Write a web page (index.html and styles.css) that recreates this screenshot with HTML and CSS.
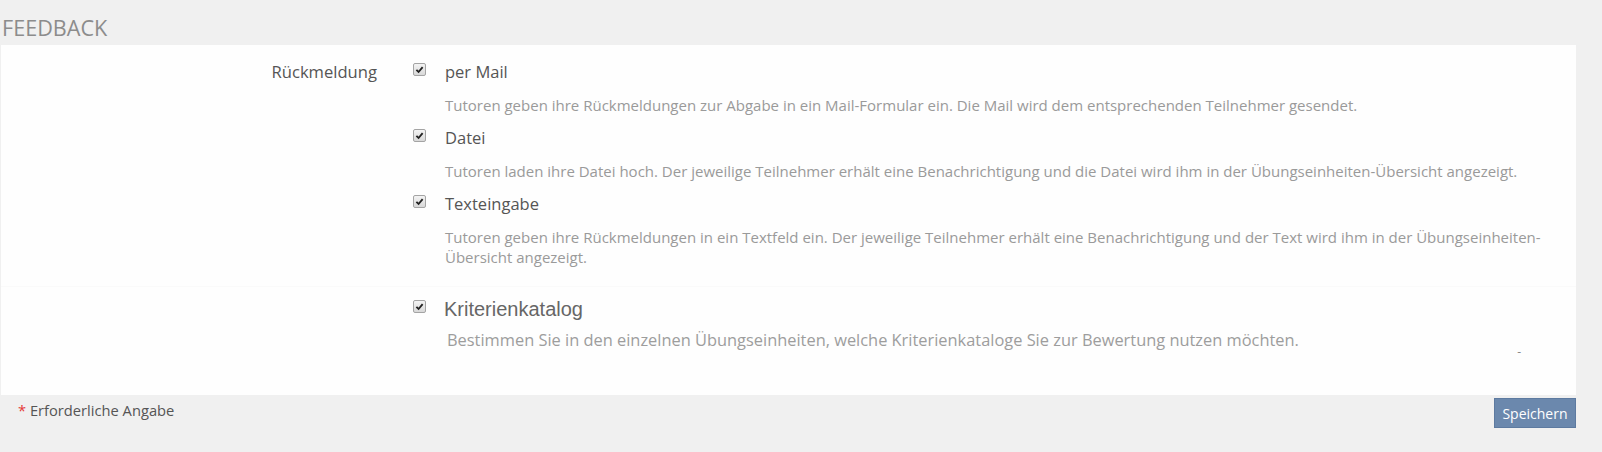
FILE: index.html
```html
<!DOCTYPE html>
<html lang="de">
<head>
  <meta charset="UTF-8">
  <meta name="viewport" content="width=device-width, initial-scale=1.0">
  <title>Feedback</title>
  <link rel="stylesheet" href="styles.css">
</head>
<body>
  <h2 class="section-title">FEEDBACK</h2>

  <div class="panel">
    <div class="form-row">
      <div class="form-label">Rückmeldung</div>
      <div class="options">
        <div class="option">
          <span class="check"><svg viewBox="0 0 12 12"><path d="M2.6 6.4 L5 8.7 L9.4 3.4" /></svg></span>
          <div class="option-body">
            <div class="option-title">per Mail</div>
            <div class="option-desc">Tutoren geben ihre Rückmeldungen zur Abgabe in ein Mail-Formular ein. Die Mail wird dem entsprechenden Teilnehmer gesendet.</div>
          </div>
        </div>
        <div class="option">
          <span class="check"><svg viewBox="0 0 12 12"><path d="M2.6 6.4 L5 8.7 L9.4 3.4" /></svg></span>
          <div class="option-body">
            <div class="option-title">Datei</div>
            <div class="option-desc">Tutoren laden ihre Datei hoch. Der jeweilige Teilnehmer erhält eine Benachrichtigung und die Datei wird ihm in der Übungseinheiten-Übersicht angezeigt.</div>
          </div>
        </div>
        <div class="option">
          <span class="check"><svg viewBox="0 0 12 12"><path d="M2.6 6.4 L5 8.7 L9.4 3.4" /></svg></span>
          <div class="option-body">
            <div class="option-title">Texteingabe</div>
            <div class="option-desc">Tutoren geben ihre Rückmeldungen in ein Textfeld ein. Der jeweilige Teilnehmer erhält eine Benachrichtigung und der Text wird ihm in der Übungseinheiten-Übersicht angezeigt.</div>
          </div>
        </div>
      </div>
    </div>

    <div class="criteria">
      <div class="option">
        <span class="check"><svg viewBox="0 0 12 12"><path d="M2.6 6.4 L5 8.7 L9.4 3.4" /></svg></span>
        <div class="option-body">
          <div class="criteria-title">Kriterienkatalog</div>
          <div class="criteria-desc">Bestimmen Sie in den einzelnen Übungseinheiten, welche Kriterienkataloge Sie zur Bewertung nutzen möchten.</div>
          <div class="criteria-dash">-</div>
        </div>
      </div>
    </div>
  </div>

  <div class="form-footer">
    <div class="required-note"><span class="star">*</span> Erforderliche Angabe</div>
    <button class="btn-save">Speichern</button>
  </div>
</body>
</html>
```

FILE: styles.css
```css
body {
  margin: 0;
  background-color: #f0f0f0;
  font-family: "Open Sans", Arial, sans-serif;
  color: #555;
}
.section-title {
  margin: 0;
  padding: 14px 0 0 2px;
  height: 31px;
  font-size: 21.6px;
  font-weight: normal;
  line-height: 28px;
  color: #8c8c8c;
}
.panel {
  margin-left: 1px;
  width: 1575px;
  height: 350px;
  background-color: #fefefe;
  box-sizing: border-box;
  padding: 10px 28px 0 0;
}
.form-row {
  display: grid;
  grid-template-columns: 376px 1fr;
  column-gap: 36px;
}
.form-label {
  text-align: right;
  font-size: 16.6px;
  line-height: 20px;
  padding-top: 7px;
  color: #555;
}
.options {
  padding-top: 7px;
}
.option {
  display: grid;
  grid-template-columns: 13px 1fr;
  column-gap: 19px;
  margin-bottom: 13px;
}
.check {
  width: 11px;
  height: 11px;
  margin-top: 1px;
  border: 1px solid #a4a4a4;
  border-radius: 2px;
  background: linear-gradient(#f4f4f4, #d8d8d8);
  display: flex;
}
.check svg {
  width: 11px;
  height: 11px;
}
.check path {
  fill: none;
  stroke: #222;
  stroke-width: 2;
}
.option-title {
  font-size: 16.5px;
  line-height: 20px;
  color: #555;
}
.option-desc {
  margin-top: 13px;
  font-size: 15px;
  line-height: 20px;
  color: #9a9a9a;
}
.criteria {
  margin-top: 6px;
  margin-right: -28px;
  padding: 11px 45px 0 412px;
  border-top: 1px solid #fafafa;
}
.criteria .option {
  margin-bottom: 0;
}
.criteria .check {
  margin-top: 2px;
}
.criteria-title {
  font-family: "Liberation Sans", Arial, sans-serif;
  font-size: 20px;
  line-height: 22px;
  color: #666;
  margin-left: -1px;
}
.criteria-desc {
  margin-top: 8px;
  font-size: 16.4px;
  line-height: 24px;
  color: #9d9d9d;
  margin-left: 2px;
}
.criteria-dash {
  text-align: right;
  font-size: 12px;
  line-height: 10px;
  color: #888;
  padding-right: 10px;
  margin-top: -5px;
}
.form-footer {
  width: 1576px;
  display: flex;
  justify-content: space-between;
  align-items: flex-start;
  padding-top: 3px;
}
.required-note {
  padding: 2px 0 0 18px;
  font-size: 14.7px;
  color: #555;
}
.star {
  color: #e53935;
}
.btn-save {
  height: 30px;
  width: 82px;
  padding: 0;
  background-color: #6b88ad;
  border: 1px solid #5d7aa0;
  color: #fff;
  font-family: "Open Sans", Arial, sans-serif;
  font-size: 14px;
}
```
